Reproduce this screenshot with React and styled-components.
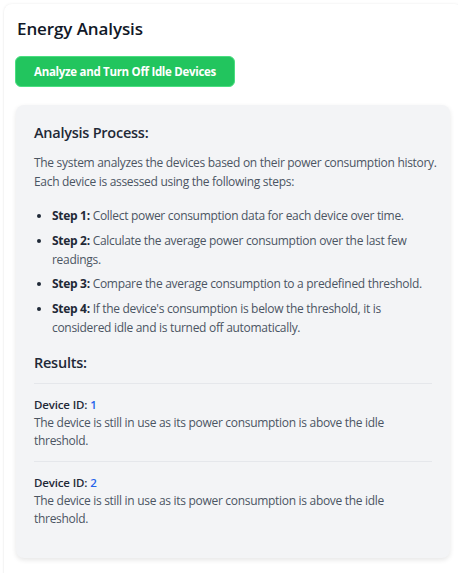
import React from "react";
import styled, { createGlobalStyle } from "styled-components";

const Global = createGlobalStyle`
  html, body { margin: 0; padding: 0; background: #ffffff; overflow-x: hidden; }
  body { font-family: "Open Sans", "Noto Sans", sans-serif; color: #1f2937; }
  * { box-sizing: border-box; }
`;

const Page = styled.div`
  width: 458px;
  margin: 4px 0 0 4px;
  padding: 11px 12px 24px;
  background: #ffffff;
  border-radius: 8px;
  box-shadow: 0 0 3px rgba(0, 0, 0, 0.08), 0 1px 2px rgba(0, 0, 0, 0.05);
`;

const Title = styled.h1`
  margin: 0 0 13px 1px;
  font-size: 17px;
  line-height: 28px;
  font-weight: 600;
  letter-spacing: -0.1px;
  color: #111827;
`;

const ActionButton = styled.button`
  display: block;
  height: 31px;
  padding: 0 18px;
  margin-left: -1px;
  border: 1px solid #4ade80;
  border-radius: 6px;
  background: #22c55e;
  color: #ffffff;
  font-family: inherit;
  font-size: 11.5px;
  font-weight: 700;
  letter-spacing: -0.3px;
  cursor: pointer;
`;

const Card = styled.section`
  margin-top: 18px;
  padding: 16px 18px 19px;
  background: #f3f4f6;
  border-radius: 8px;
  box-shadow: 0 2px 5px rgba(0, 0, 0, 0.1);
`;

const SectionTitle = styled.h2`
  margin: ${(p) => p.$mt || "0"} 0 ${(p) => p.$mb || "8px"};
  font-size: 14.5px;
  line-height: 24px;
  font-weight: 600;
  letter-spacing: -0.25px;
  color: #1f2937;
`;

const Paragraph = styled.p`
  margin: 0 0 15px;
  font-size: 12px;
  line-height: 19px;
  letter-spacing: -0.3px;
  color: #4b5563;
`;

const Sentence = styled.span`
  white-space: nowrap;
`;

const Steps = styled.ul`
  margin: 0;
  padding-left: 18px;
  list-style: disc;
  color: #4b5563;
`;

const Step = styled.li`
  font-size: 12px;
  line-height: 19px;
  letter-spacing: -0.3px;
  margin-bottom: 5.5px;
  &:last-child { margin-bottom: 0; }
  &::marker { color: #1f2937; }
`;

const Strong = styled.strong`
  color: #1f2937;
  font-weight: 700;
`;

const Result = styled.div`
  padding: 12px 0 11px;
  border-top: 1px solid #e5e7eb;
`;

const DeviceLabel = styled.div`
  font-size: 11.5px;
  line-height: 18px;
  font-weight: 600;
  letter-spacing: -0.15px;
  color: #1f2937;
`;

const DeviceId = styled.span`
  color: #2563eb;
`;

const DeviceText = styled.div`
  font-size: 12px;
  line-height: 18px;
  letter-spacing: -0.3px;
  color: #4b5563;
`;

const steps = [
  ["Step 1:", "Collect power consumption data for each device over time."],
  ["Step 2:", "Calculate the average power consumption over the last few readings."],
  ["Step 3:", "Compare the average consumption to a predefined threshold."],
  ["Step 4:", "If the device's consumption is below the threshold, it is considered idle and is turned off automatically."],
];

const results = [1, 2];

export default function App() {
  return (
    <>
      <Global />
      <Page>
        <Title>Energy Analysis</Title>
        <ActionButton>Analyze and Turn Off Idle Devices</ActionButton>
        <Card>
          <SectionTitle>Analysis Process:</SectionTitle>
          <Paragraph>
            <Sentence>The system analyzes the devices based on their power consumption history.</Sentence>{" "}
            Each device is assessed using the following steps:
          </Paragraph>
          <Steps>
            {steps.map(([label, text]) => (
              <Step key={label}>
                <Strong>{label}</Strong> {text}
              </Step>
            ))}
          </Steps>
          <SectionTitle $mt="14px" $mb="8px">Results:</SectionTitle>
          {results.map((id) => (
            <Result key={id}>
              <DeviceLabel>
                Device ID: <DeviceId>{id}</DeviceId>
              </DeviceLabel>
              <DeviceText>
                The device is still in use as its power consumption is above the idle threshold.
              </DeviceText>
            </Result>
          ))}
        </Card>
      </Page>
    </>
  );
}
